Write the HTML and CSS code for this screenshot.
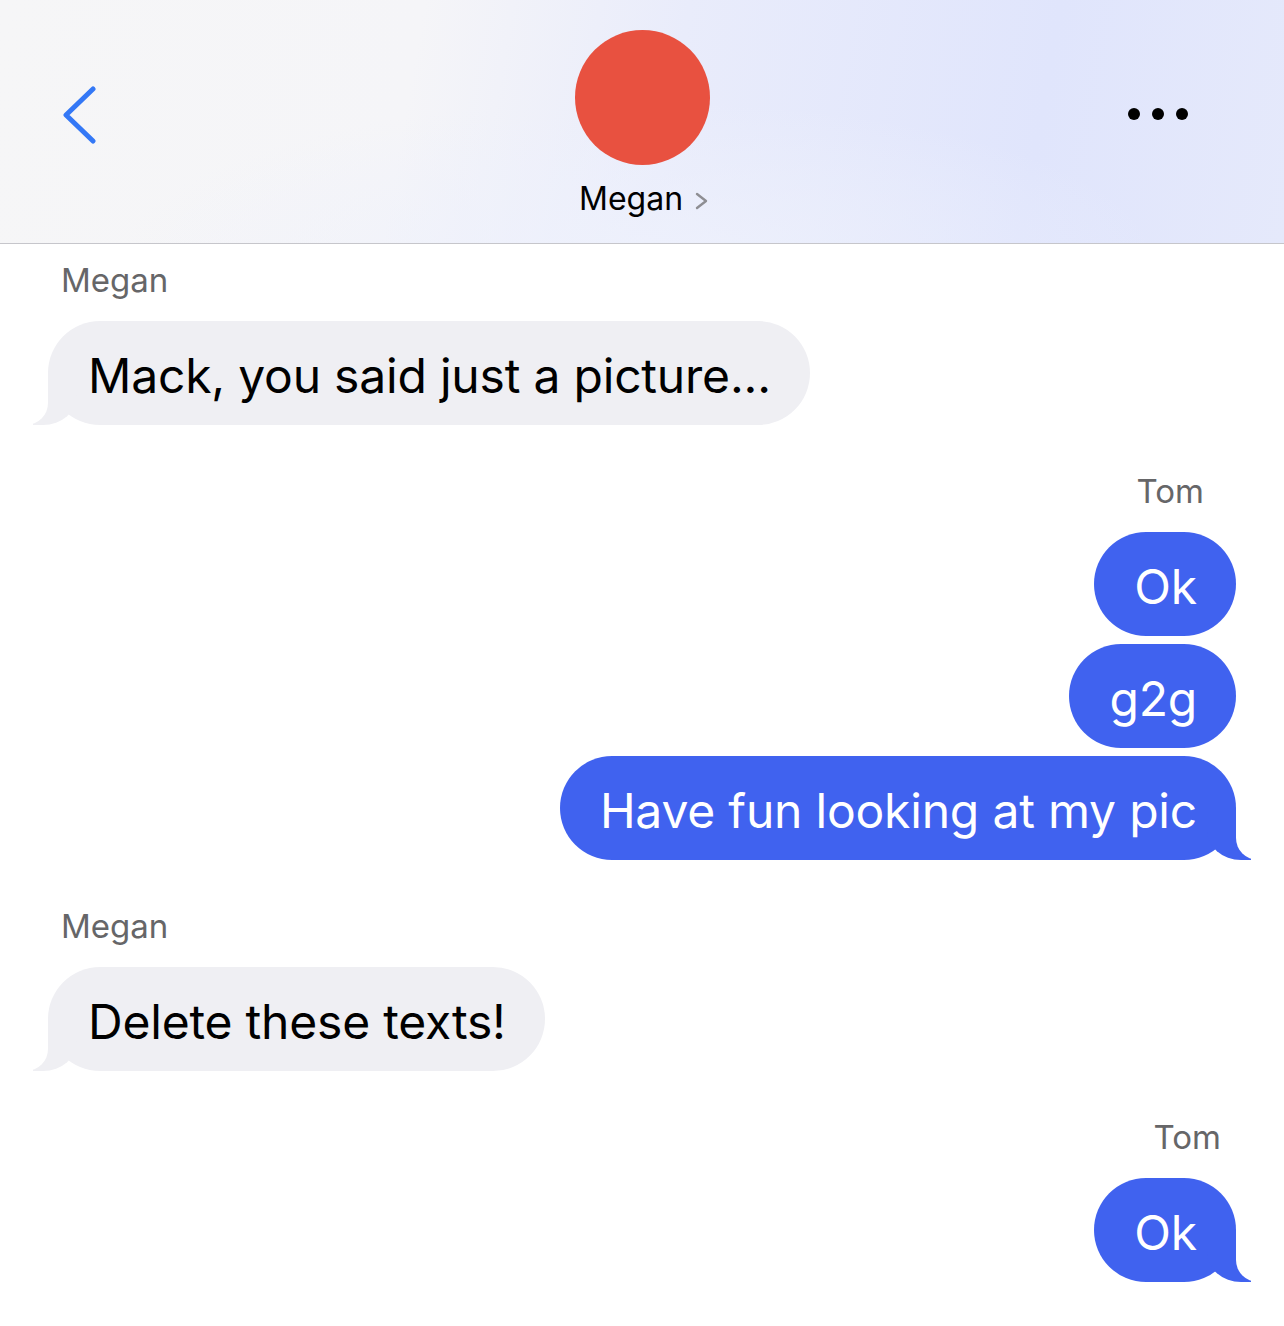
FILE: index.html
```html
<!DOCTYPE html>
<html lang="en">
<head>
  <meta charset="UTF-8" />
  <meta name="viewport" content="width=device-width, initial-scale=1.0"/>
  <title>Megan</title>
  <link rel="stylesheet" href="styles.css">
</head>
<body>

<header class="nav">
  <a class="nav-back" href="#" aria-label="Back">
    <svg width="40" height="60" viewBox="0 0 40 60">
      <path d="M31 3 L4 29 L31 55" fill="none" stroke="#3478f6" stroke-width="5" stroke-linecap="round" stroke-linejoin="round"/>
    </svg>
  </a>

  <div class="contact">
    <div class="avatar"></div>
    <div class="contact-name">
      Megan
      <svg width="14" height="18" viewBox="0 0 14 18">
        <path d="M2 2 L11 9 L2 16" fill="none" stroke="#8e8e93" stroke-width="2.4" stroke-linecap="round" stroke-linejoin="round"/>
      </svg>
    </div>
  </div>

  <div class="nav-more" aria-label="More">
    <span></span><span></span><span></span>
  </div>
</header>

<main class="thread">
  <div class="group received">
    <div class="sender">Megan</div>
    <div class="bubble tail">Mack, you said just a picture...</div>
  </div>

  <div class="group sent">
    <div class="sender">Tom</div>
    <div class="bubble">Ok</div>
    <div class="bubble">g2g</div>
    <div class="bubble tail">Have fun looking at my pic</div>
  </div>

  <div class="group received">
    <div class="sender">Megan</div>
    <div class="bubble tail">Delete these texts!</div>
  </div>

  <div class="group sent">
    <div class="sender sender-far">Tom</div>
    <div class="bubble tail">Ok</div>
  </div>
</main>

</body>
</html>
```

FILE: styles.css
```css
body {
  margin: 0;
  background: #fff;
  font-family: Inter, "Noto Sans", sans-serif;
  color: #000;
}

/* header */
.nav {
  height: 243px;
  border-bottom: 1px solid #c6c6cb;
  display: grid;
  grid-template-columns: 1fr auto 1fr;
  align-items: start;
  background:
    radial-gradient(ellipse 520px 160px at 640px 260px, rgba(238,241,252,0.9), rgba(238,241,252,0)),
    linear-gradient(100deg, #f6f6f7 0%, #f5f5f8 32%, #e9ecfb 52%, #e0e5fc 80%, #e5e9fb 100%);
}
.nav-back {
  margin: 86px 0 0 62px;
  display: block;
  width: 40px;
}
.contact {
  padding-top: 30px;
  display: flex;
  flex-direction: column;
  align-items: center;
}
.avatar {
  width: 135px;
  height: 135px;
  border-radius: 50%;
  background: #e85140;
}
.contact-name {
  margin-top: 16px;
  margin-left: 4px;
  font-size: 32px;
  line-height: 36px;
  display: flex;
  align-items: center;
  gap: 12px;
}
.contact-name svg {
  margin-top: 3px;
}
.nav-more {
  justify-self: end;
  margin: 108px 96px 0 0;
  display: flex;
  gap: 12px;
}
.nav-more span {
  width: 12px;
  height: 12px;
  border-radius: 50%;
  background: #000;
}

/* messages */
.thread {
  padding: 16px 48px 40px;
}
.group {
  display: flex;
  flex-direction: column;
  gap: 8px;
  margin-bottom: 46px;
}
.group.received {
  align-items: flex-start;
}
.group.sent {
  align-items: flex-end;
}
.sender {
  font-size: 33px;
  line-height: 40px;
  color: #666668;
  margin-bottom: 13px;
}
.received .sender {
  padding-left: 13px;
}
.sent .sender {
  padding-right: 32px;
}
.sent .sender-far {
  padding-right: 15px;
}
.bubble {
  position: relative;
  font-size: 48px;
  letter-spacing: -0.2px;
  line-height: 104px;
  height: 104px;
  box-sizing: border-box;
  padding: 3px 39px 0 40px;
  border-radius: 52px;
  white-space: nowrap;
}
.received .bubble {
  background: #efeff3;
  color: #000;
}
.sent .bubble {
  background: #4062ef;
  color: #fff;
}

/* bubble tails */
.bubble.tail::before,
.bubble.tail::after {
  content: "";
  position: absolute;
  bottom: 0;
  height: 52px;
}
.received .bubble.tail::before {
  left: -15px;
  width: 44px;
  background: #efeff3;
  border-bottom-right-radius: 34px 30px;
}
.received .bubble.tail::after {
  left: -56px;
  width: 56px;
  background: #fff;
  border-bottom-right-radius: 22px;
}
.sent .bubble.tail::before {
  right: -15px;
  width: 44px;
  background: #4062ef;
  border-bottom-left-radius: 34px 30px;
}
.sent .bubble.tail::after {
  right: -56px;
  width: 56px;
  background: #fff;
  border-bottom-left-radius: 22px;
}
```
